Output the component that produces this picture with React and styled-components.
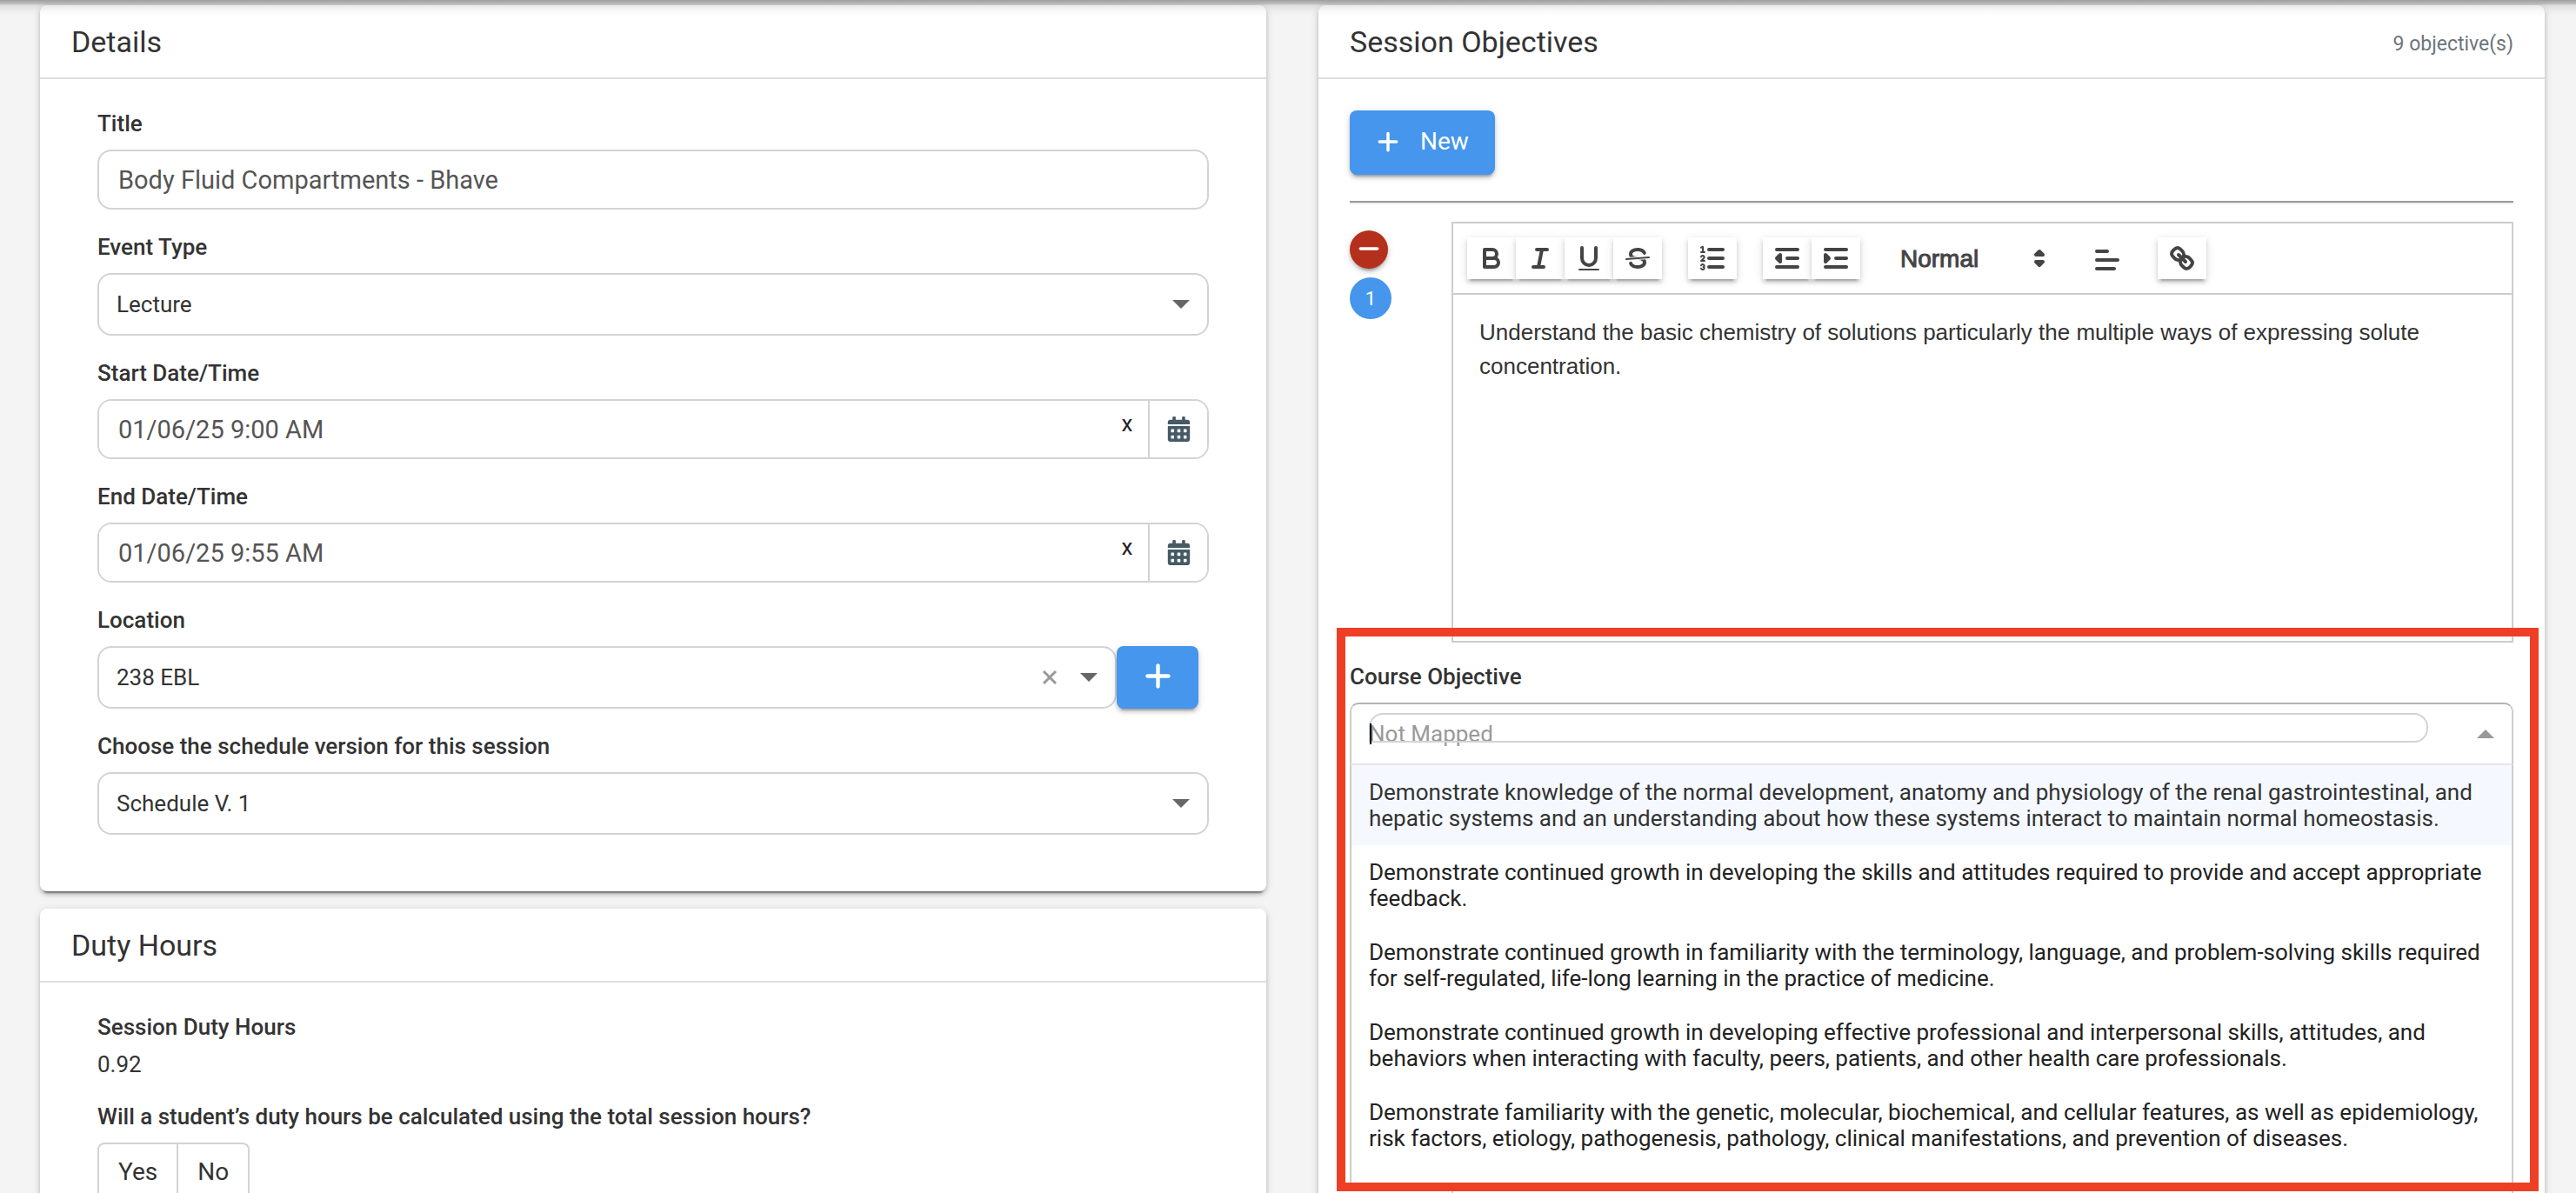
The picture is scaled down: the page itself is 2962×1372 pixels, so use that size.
import React from "react";
import styled, { createGlobalStyle } from "styled-components";
import { FaPlus, FaMinus } from "react-icons/fa6";
import { FaCalendarAlt } from "react-icons/fa";

const GlobalStyle = createGlobalStyle`
  *, *::before, *::after { box-sizing: border-box; }
  body {
    margin: 0;
    background: #f4f4f4;
    color: #333;
    font: 400 26px/39px Roboto, "Liberation Sans", sans-serif;
  }
  button, input, select { font: inherit; color: inherit; margin: 0; }
  h2 { margin: 0; }
`;

const raised = `
  box-shadow: 0 4px 4px rgba(0, 0, 0, 0.14), 0 6px 2px -4px rgba(0, 0, 0, 0.2),
    0 2px 10px rgba(0, 0, 0, 0.12);
`;

/* ---------- page ---------- */

const Page = styled.main`
  position: relative;
  display: grid;
  grid-template-columns: minmax(0, 1fr) minmax(0, 1fr);
  gap: 60px;
  align-items: start;
  height: 100vh;
  padding: 6px 36px 0 46px;
  overflow: hidden;
`;

const HeaderShadow = styled.div`
  position: absolute;
  inset: 0 0 auto;
  height: 18px;
  background: linear-gradient(
    rgba(0, 0, 0, 0.35),
    rgba(0, 0, 0, 0.2) 5px,
    rgba(0, 0, 0, 0.09) 6px,
    rgba(0, 0, 0, 0.03) 12px,
    transparent
  );
  pointer-events: none;
`;

const Column = styled.div`
  display: flex;
  flex-direction: column;
  gap: 20px;
`;

const Card = styled.section`
  background: #fff;
  border-radius: 8px;
  box-shadow: 0 4px 4px rgba(0, 0, 0, 0.14), 0 6px 2px -4px rgba(0, 0, 0, 0.4),
    0 2px 10px rgba(0, 0, 0, 0.16);
`;

const CardHeader = styled.header`
  display: flex;
  align-items: center;
  justify-content: space-between;
  height: 85px;
  padding: 0 36px;
  border-bottom: 2px solid #dedede;
`;

const CardTitle = styled.h2`
  font-size: 34px;
  font-weight: 400;
  line-height: 50px;
`;

const CardNote = styled.span`
  padding-top: 6px;
  color: #6c757d;
  font-size: 23px;
  line-height: 36px;
`;

const FormBody = styled.form`
  display: flex;
  flex-direction: column;
  gap: 24px;
  padding: 32px 66px 65px;
`;

/* ---------- form fields ---------- */

const Field = styled.div`
  display: flex;
  flex-direction: column;
`;

const Label = styled.label`
  align-self: flex-start;
  margin-bottom: 10px;
  font-weight: 500;
`;

const FieldValue = styled.output`
  margin-top: -4px;
  line-height: 34px;
`;

const TextInput = styled.input`
  width: 100%;
  min-width: 0;
  height: 69px;
  padding: 0 20px 0 22px;
  border: 2px solid #d3d3d3;
  border-radius: 16px;
  background: #fff;
  color: #555;
  font-size: 29px;
  outline: none;
`;

const DateGroup = styled.div`
  display: flex;
  height: 69px;
  border: 2px solid #d3d3d3;
  border-radius: 16px;
  overflow: hidden;

  ${TextInput} {
    flex: 1;
    height: 65px;
    border: 0;
    border-radius: 0;
  }
`;

const ClearButton = styled.button`
  width: 48px;
  padding: 0 0 12px;
  border: 0;
  background: transparent;
  color: #222;
`;

const CalendarButton = styled.button`
  display: flex;
  align-items: center;
  justify-content: center;
  width: 68px;
  padding: 0;
  border: 0;
  border-left: 2px solid #d3d3d3;
  background: #fff;
  color: #455a64;
  font-size: 29px;
`;

const SelectBox = styled.div`
  display: grid;
  flex: 1;
  align-items: center;
  min-height: 72px;
  border: 2px solid #d3d3d3;
  border-radius: 16px;
  background: #fff;

  > * { grid-area: 1 / 1; }
`;

const NativeSelect = styled.select`
  width: 100%;
  height: 68px;
  padding: 0 20px;
  border: 0;
  background: transparent;
  appearance: none;
  outline: none;
`;

const Adornments = styled.span`
  display: flex;
  align-items: center;
  justify-self: end;
  gap: 26px;
  padding-right: 20px;
  pointer-events: none;
`;

const RemoveButton = styled.button`
  display: flex;
  padding: 0;
  border: 0;
  background: transparent;
  color: #999;
  pointer-events: auto;
`;

const Caret = styled.span`
  border: 10px solid transparent;
  border-bottom-width: 0;
  border-top-color: #666;
  ${(p) => p.$up && "border-width: 0 10px 10px; border-bottom-color: #999;"}
`;

const ControlRow = styled.div`
  display: flex;
  padding-right: 12px;
`;

const PrimaryButton = styled.button`
  display: inline-flex;
  align-items: center;
  justify-content: center;
  gap: 23px;
  height: ${(p) => (p.$square ? "72px" : "74px")};
  width: ${(p) => (p.$square ? "94px" : "auto")};
  padding: 0 ${(p) => (p.$square ? "0" : "30px")} 3px;
  border: 0;
  border-radius: 8px;
  background: #4596ec;
  color: #fff;
  font-size: 28px;
  ${raised}
`;

const Choices = styled.div`
  display: flex;
  align-self: flex-start;
  height: 66px;
  border: 2px solid #d3d3d3;
  border-radius: 8px;
  background: #fff;
`;

const Choice = styled.button`
  padding: 0 22px;
  border: 0;
  background: transparent;
  font-size: 28px;

  & + & { border-left: 2px solid #d3d3d3; }
`;

/* ---------- objectives ---------- */

const ObjectivesBody = styled.div`
  display: flex;
  flex-direction: column;
  align-items: stretch;
  padding: 36px 36px 0;

  > ${PrimaryButton} { align-self: flex-start; }
`;

const Divider = styled.hr`
  width: 100%;
  height: 4px;
  margin: 30px 0 20px;
  border: 0;
  border-top: 2px solid #999;
  background: #eee;
`;

const ObjectiveRow = styled.div`
  display: grid;
  grid-template-columns: 117px minmax(0, 1fr);
`;

const Badges = styled.div`
  display: flex;
  flex-direction: column;
  gap: 10px;
  padding-top: 10px;
`;

const DeleteButton = styled.button`
  display: flex;
  align-items: center;
  justify-content: center;
  width: 44px;
  height: 44px;
  padding: 0 0 2px;
  border: 0;
  border-radius: 50%;
  background: #b4301c;
  color: #fff;
  font-size: 28px;
  ${raised}
`;

const OrderBadge = styled.span`
  display: flex;
  align-items: center;
  justify-content: center;
  width: 48px;
  height: 48px;
  border-radius: 50%;
  background: #4596ec;
  color: #fff;
  font-size: 22px;
`;

const Editor = styled.div`
  display: flex;
  flex-direction: column;
  height: 484px;
  border: 2px solid #ccc;
`;

const Toolbar = styled.div`
  display: flex;
  gap: 30px;
  padding: 16px;
  border-bottom: 2px solid #ccc;
`;

const ToolGroup = styled.div`
  display: flex;
`;

const ToolButton = styled.button`
  display: flex;
  width: 56px;
  height: 48px;
  padding: ${(p) => (p.$flat ? "8px 10px 4px" : "6px 10px")};
  border: 0;
  background: #fff;
  ${(p) => !p.$flat && raised}
`;

const ToolSvg = styled.svg`
  width: 36px;
  height: 36px;
  fill: none;
  stroke: #444;
  stroke-width: 2;
  stroke-linecap: round;
  stroke-linejoin: round;

  .thin { stroke-width: 1; }
  .fill { fill: #444; }
  .solid { fill: #444; stroke: none; }
`;

const FormatPicker = styled.div`
  display: grid;
  align-items: center;
  width: 196px;
  height: 48px;

  > * { grid-area: 1 / 1; }
  > svg { justify-self: end; margin-right: 2px; pointer-events: none; }
`;

const FormatSelect = styled.select`
  width: 100%;
  height: 48px;
  padding: 0 0 0 16px;
  border: 0;
  background: transparent;
  color: #444;
  font: 500 28px "Liberation Sans", Arial, sans-serif;
  -webkit-text-stroke: 1px #444;
  appearance: none;
  outline: none;
`;

const EditorText = styled.div`
  flex: 1;
  padding: 24px 30px;
  font: 26px/39px "Liberation Sans", Arial, sans-serif;
  outline: none;
`;

const MappingField = styled(Field)`
  position: relative;
  margin-top: 20px;
`;

const ComboBox = styled.div`
  position: relative;
  display: grid;
  align-items: center;
  height: 72px;
  border: 2px solid #ccc;
  border-top-color: #b3b3b3;
  border-bottom-color: #e6e6e6;
  border-radius: 10px 10px 0 0;
  background: #fff;

  > * { grid-area: 1 / 1; }
`;

const Placeholder = styled.span`
  padding-left: 20px;
  color: #999;
`;

const SearchInput = styled.input`
  align-self: start;
  height: 34px;
  margin: 10px 96px 0 20px;
  padding: 0;
  border: 2px solid #d3d3d3;
  border-radius: 16px 16px 16px 0;
  background: transparent;
  outline: none;
`;

const TextCursor = styled.span`
  width: 2px;
  height: 24px;
  margin-left: 21px;
  background: #000;
`;

const Options = styled.ul`
  position: absolute;
  top: 100%;
  left: 0;
  right: 0;
  z-index: 1;
  height: 480px;
  margin: 0;
  padding: 0;
  overflow: hidden;
  border: solid #ccc;
  border-width: 0 2px;
  background: #fff;
  list-style: none;
`;

const Option = styled.li`
  padding: 16px 20px;
  line-height: 30px;
  color: ${(p) => (p.$active ? "#333" : "#222")};
  background: ${(p) => (p.$active ? "#f5f9ff" : "#fff")};
`;

const NextObjective = styled.div`
  padding: 80px 0 24px 117px;
`;

const Highlight = styled.div`
  position: absolute;
  top: 722px;
  bottom: 2px;
  right: 43px;
  left: calc(50% + 56px);
  z-index: 2;
  border: 10px solid #ee3f26;
  pointer-events: none;
`;

/* ---------- toolbar drawings ---------- */

const drawings = {
  bold: (
    <>
      <path d="M5,4H9.5A2.5,2.5,0,0,1,12,6.5v0A2.5,2.5,0,0,1,9.5,9H5V4Z" />
      <path d="M5,9h5.5A2.5,2.5,0,0,1,13,11.5v0A2.5,2.5,0,0,1,10.5,14H5V9Z" />
    </>
  ),
  italic: <path d="M7,4H13M5,14H11M8,14L10,4" />,
  underline: (
    <>
      <path d="M5,3V9a4.012,4.012,0,0,0,4,4H9a4.012,4.012,0,0,0,4-4V3" />
      <rect className="solid" x="3" y="15" width="12" height="1" rx="0.5" />
    </>
  ),
  strike: (
    <>
      <path className="thin" d="M15.5,8.5L2.5,9.5" />
      <path className="solid" d="M9.007,8C6.542,7.791,6,7.519,6,6.5,6,5.792,7.283,5,9,5c1.571,0,2.765.679,2.969,1.309a1,1,0,0,0,1.9-.617C13.356,4.106,11.354,3,9,3,6.2,3,4,4.538,4,6.5a3.2,3.2,0,0,0,.5,1.843Z" />
      <path className="solid" d="M8.984,10C11.457,10.208,12,10.479,12,11.5c0,0.708-1.283,1.5-3,1.5-1.571,0-2.765-.679-2.969-1.309a1,1,0,1,0-1.9.617C4.644,13.894,6.646,15,9,15c2.8,0,5-1.538,5-3.5a3.2,3.2,0,0,0-.5-1.843Z" />
    </>
  ),
  ordered: (
    <>
      <path d="M7,4H15M7,9H15M7,14H15" />
      <path className="thin" d="M2.5,5.5H4.5M2.5,2.8L3.5,2.4V5.5" />
      <path className="thin" d="M4.5,10.5h-2c0-.234,1.85-1.076,1.85-2.234A0.959,0.959,0,0,0,2.5,8.156" />
      <path className="thin" d="M2.5,14.846a0.959,0.959,0,0,0,1.85-.109A0.7,0.7,0,0,0,3.75,14a0.688,0.688,0,0,0,.6-0.736,0.959,0.959,0,0,0-1.85-.109" />
    </>
  ),
  outdent: (
    <>
      <path d="M3,14H15M3,4H15M9,9H15" />
      <path className="fill" d="M5,7V11L3,9Z" />
    </>
  ),
  indent: (
    <>
      <path d="M3,14H15M3,4H15M9,9H15" />
      <path className="fill" d="M3,7V11L5,9Z" />
    </>
  ),
  updown: <path className="fill" d="M7,11L9,13L11,11ZM7,7L9,5L11,7Z" />,
  align: <path d="M3,9H15M3,14H13M3,4H9" />,
  link: (
    <>
      <path d="M7,7L11,11" />
      <path d="M8.9,4.577a3.476,3.476,0,0,1,.36,4.679A3.476,3.476,0,0,1,4.577,8.9C3.185,7.5,2.035,6.4,4.217,4.217S7.5,3.185,8.9,4.577Z" />
      <path d="M13.423,9.1a3.476,3.476,0,0,0-4.679-.36,3.476,3.476,0,0,0,.36,4.679c1.392,1.392,2.5,2.542,4.679.36S14.815,10.5,13.423,9.1Z" />
    </>
  ),
};

const Drawing = ({ name }) => (
  <ToolSvg viewBox="0 0 18 18" aria-hidden="true">
    {drawings[name]}
  </ToolSvg>
);

const Tool = ({ name, flat }) => (
  <ToolButton type="button" aria-label={name} $flat={flat}>
    <Drawing name={name} />
  </ToolButton>
);

/* ---------- composed parts ---------- */

const DateField = ({ id, label, value }) => (
  <Field>
    <Label htmlFor={id}>{label}</Label>
    <DateGroup>
      <TextInput id={id} defaultValue={value} />
      <ClearButton type="button">x</ClearButton>
      <CalendarButton type="button" aria-label={`Pick ${label}`}>
        <FaCalendarAlt />
      </CalendarButton>
    </DateGroup>
  </Field>
);

const SelectControl = ({ id, value, clearable }) => (
  <SelectBox>
    <NativeSelect id={id} defaultValue={value}>
      <option>{value}</option>
    </NativeSelect>
    <Adornments>
      {clearable && (
        <RemoveButton type="button" aria-label="Clear">
          <svg width="18" height="18" viewBox="0 0 18 18" aria-hidden="true">
            <path d="M2 2L16 16M16 2L2 16" stroke="currentColor" strokeWidth="3" />
          </svg>
        </RemoveButton>
      )}
      <Caret />
    </Adornments>
  </SelectBox>
);

const SelectField = ({ id, label, value }) => (
  <Field>
    <Label htmlFor={id}>{label}</Label>
    <SelectControl id={id} value={value} />
  </Field>
);

const courseObjectives = [
  "Demonstrate knowledge of the normal development, anatomy and physiology of the renal gastrointestinal, and hepatic systems and an understanding about how these systems interact to maintain normal homeostasis.",
  "Demonstrate continued growth in developing the skills and attitudes required to provide and accept appropriate feedback.",
  "Demonstrate continued growth in familiarity with the terminology, language, and problem-solving skills required for self-regulated, life-long learning in the practice of medicine.",
  "Demonstrate continued growth in developing effective professional and interpersonal skills, attitudes, and behaviors when interacting with faculty, peers, patients, and other health care professionals.",
  "Demonstrate familiarity with the genetic, molecular, biochemical, and cellular features, as well as epidemiology, risk factors, etiology, pathogenesis, pathology, clinical manifestations, and prevention of diseases.",
];

const EditorToolbar = () => (
  <Toolbar role="toolbar">
    <ToolGroup>
      <Tool name="bold" />
      <Tool name="italic" />
      <Tool name="underline" />
      <Tool name="strike" />
    </ToolGroup>
    <ToolGroup>
      <Tool name="ordered" />
    </ToolGroup>
    <ToolGroup>
      <Tool name="outdent" />
      <Tool name="indent" />
    </ToolGroup>
    <FormatPicker>
      <FormatSelect aria-label="Text style" defaultValue="Normal">
        <option>Normal</option>
      </FormatSelect>
      <Drawing name="updown" />
    </FormatPicker>
    <ToolGroup>
      <Tool name="align" flat />
    </ToolGroup>
    <ToolGroup>
      <Tool name="link" />
    </ToolGroup>
  </Toolbar>
);

export default function App() {
  return (
    <>
      <GlobalStyle />
      <Page>
        <Column>
          <Card>
            <CardHeader>
              <CardTitle>Details</CardTitle>
            </CardHeader>
            <FormBody>
              <Field>
                <Label htmlFor="title">Title</Label>
                <TextInput id="title" defaultValue="Body Fluid Compartments - Bhave" />
              </Field>
              <SelectField id="event-type" label="Event Type" value="Lecture" />
              <DateField id="start" label="Start Date/Time" value="01/06/25 9:00 AM" />
              <DateField id="end" label="End Date/Time" value="01/06/25 9:55 AM" />
              <Field>
                <Label htmlFor="location">Location</Label>
                <ControlRow>
                  <SelectControl id="location" value="238 EBL" clearable />
                  <PrimaryButton type="button" aria-label="Add location" $square>
                    <FaPlus size={35} />
                  </PrimaryButton>
                </ControlRow>
              </Field>
              <SelectField
                id="version"
                label="Choose the schedule version for this session"
                value="Schedule V. 1"
              />
            </FormBody>
          </Card>
          <Card>
            <CardHeader>
              <CardTitle>Duty Hours</CardTitle>
            </CardHeader>
            <FormBody>
              <Field>
                <Label htmlFor="duty-hours">Session Duty Hours</Label>
                <FieldValue id="duty-hours">0.92</FieldValue>
              </Field>
              <Field>
                <Label as="span" id="calc">
                  Will a student’s duty hours be calculated using the total session hours?
                </Label>
                <Choices role="group" aria-labelledby="calc">
                  <Choice type="button">Yes</Choice>
                  <Choice type="button">No</Choice>
                </Choices>
              </Field>
            </FormBody>
          </Card>
        </Column>
        <Card>
          <CardHeader>
            <CardTitle>Session Objectives</CardTitle>
            <CardNote>9 objective(s)</CardNote>
          </CardHeader>
          <ObjectivesBody>
            <PrimaryButton type="button">
              <FaPlus />
              New
            </PrimaryButton>
            <Divider />
            <ObjectiveRow>
              <Badges>
                <DeleteButton type="button" aria-label="Remove objective">
                  <FaMinus />
                </DeleteButton>
                <OrderBadge>1</OrderBadge>
              </Badges>
              <Editor>
                <EditorToolbar />
                <EditorText>
                  Understand the basic chemistry of solutions particularly the multiple ways of
                  expressing solute concentration.
                </EditorText>
              </Editor>
            </ObjectiveRow>
            <MappingField>
              <Label htmlFor="course-objective">Course Objective</Label>
              <ComboBox>
                <Placeholder>Not Mapped</Placeholder>
                <SearchInput id="course-objective" role="combobox" aria-expanded="true" />
                <TextCursor />
                <Adornments>
                  <Caret $up />
                </Adornments>
              </ComboBox>
              <Options role="listbox">
                {courseObjectives.map((text, i) => (
                  <Option key={text} role="option" $active={i === 0}>
                    {text}
                  </Option>
                ))}
              </Options>
            </MappingField>
            <NextObjective>
              <Editor />
            </NextObjective>
          </ObjectivesBody>
        </Card>
        <HeaderShadow />
        <Highlight />
      </Page>
    </>
  );
}
